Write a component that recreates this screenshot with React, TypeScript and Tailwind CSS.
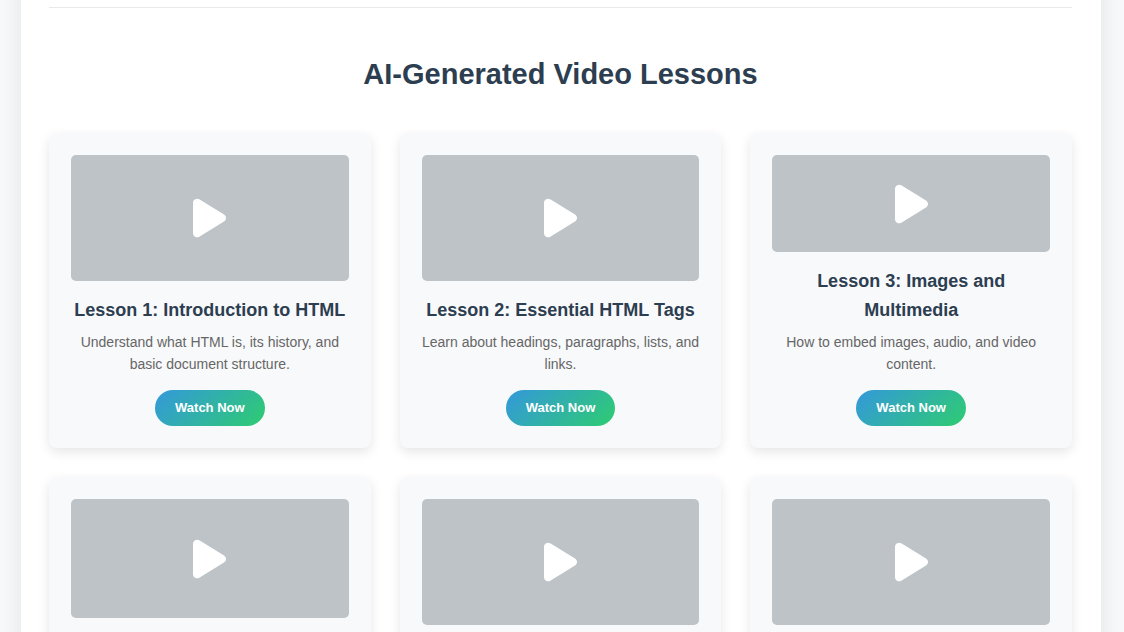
import { FaPlay } from "react-icons/fa6";

type Lesson = {
  title: string;
  description: string;
};

const lessons: Lesson[] = [
  {
    title: "Lesson 1: Introduction to HTML",
    description:
      "Understand what HTML is, its history, and basic document structure.",
  },
  {
    title: "Lesson 2: Essential HTML Tags",
    description: "Learn about headings, paragraphs, lists, and links.",
  },
  {
    title: "Lesson 3: Images and Multimedia",
    description: "How to embed images, audio, and video content.",
  },
  {
    title: "Lesson 4: Creating Forms and User Inputs",
    description: "Build forms that collect user data.",
  },
  {
    title: "Lesson 5: Tables and Lists",
    description: "Organize your content with tables, nested lists, and captions.",
  },
  {
    title: "Lesson 6: Semantic HTML",
    description: "Structure pages with meaningful and accessible elements.",
  },
];

function LessonCard({ title, description }: Lesson) {
  return (
    <article className="flex h-[315px] flex-col items-center rounded-lg bg-[#f8f9fb] p-[22px] text-center shadow-[0_4px_12px_rgba(0,0,0,0.1)]">
      <div className="mb-[15px] flex min-h-0 w-full flex-1 items-center justify-center rounded-[5px] bg-[#bdc3c7] text-white">
        <FaPlay className="h-11 w-[33px]" aria-hidden="true" />
      </div>
      <h3 className="mb-1.5 text-[18px] leading-[29px] font-bold text-[#2c3e50]">
        {title}
      </h3>
      <p className="mb-[15px] text-[14px] leading-[22px] text-[#666666]">
        {description}
      </p>
      <button
        type="button"
        className="h-9 shrink-0 cursor-pointer rounded-full bg-[linear-gradient(135deg,#3498db,#2ecc71)] px-5 text-[13px] font-bold whitespace-nowrap text-white"
      >
        Watch Now
      </button>
    </article>
  );
}

export default function App() {
  return (
    <div className="min-h-screen overflow-hidden bg-[#f8fafc] pr-0.5 font-['Liberation_Sans',Arial,sans-serif]">
      <main className="mx-auto -mt-10 max-w-[1080px] bg-white pt-[47px] pr-[29px] pb-9 pl-7 shadow-[0_0_27px_rgba(0,0,0,0.1)]">
        <section className="border-t border-[#e9e9e9] pt-[43px]">
          <h2 className="mb-9 text-center text-[29px] leading-[46px] font-bold text-[#2c3e50]">
            AI-Generated Video Lessons
          </h2>
          <div className="grid grid-cols-1 gap-[29px] sm:grid-cols-2 lg:grid-cols-3">
            {lessons.map((lesson) => (
              <LessonCard key={lesson.title} {...lesson} />
            ))}
          </div>
        </section>
      </main>
    </div>
  );
}
